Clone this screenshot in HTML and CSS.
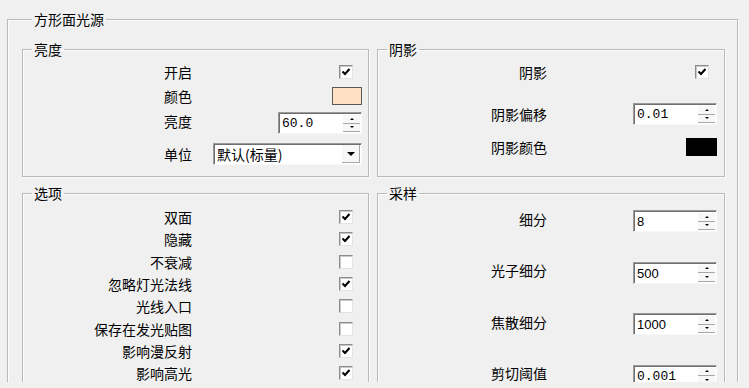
FILE: index.html
```html
<!DOCTYPE html>
<html lang="zh-CN">

<head>
    <meta charset="UTF-8">
    <meta name="viewport" content="width=device-width, initial-scale=1.0">
    <title>方形面光源</title>
    <link rel="stylesheet" href="styles.css">
</head>

<body>

    <div class="screen">
        <fieldset class="group outer">
            <legend>方形面光源</legend>

            <div class="columns">
                <!-- brightness -->
                <fieldset class="group brightness">
                    <legend>亮度</legend>
                    <div class="row">
                        <span class="label">开启</span>
                        <span class="check on"><svg viewBox="0 0 12 12"><path d="M2.5 5.5 L5 8 L9.5 3"/></svg></span>
                    </div>
                    <div class="row">
                        <span class="label">颜色</span>
                        <span class="swatch peach"></span>
                    </div>
                    <div class="row spin-row">
                        <span class="label up">亮度</span>
                        <span class="spin"><span class="value mono">60.0</span><span class="arrows"><i class="up-arrow"></i><i class="down-arrow"></i></span></span>
                    </div>
                    <div class="row select-row">
                        <span class="label">单位</span>
                        <span class="select"><span class="value">默认(标量)</span><span class="drop"><i class="down-arrow big"></i></span></span>
                    </div>
                </fieldset>

                <!-- shadow -->
                <fieldset class="group shadow">
                    <legend>阴影</legend>
                    <div class="row">
                        <span class="label">阴影</span>
                        <span class="check on"><svg viewBox="0 0 12 12"><path d="M2.5 5.5 L5 8 L9.5 3"/></svg></span>
                    </div>
                    <div class="row offset-row">
                        <span class="label">阴影偏移</span>
                        <span class="spin"><span class="value mono">0.01</span><span class="arrows"><i class="up-arrow"></i><i class="down-arrow"></i></span></span>
                    </div>
                    <div class="row">
                        <span class="label">阴影颜色</span>
                        <span class="swatch black"></span>
                    </div>
                </fieldset>

                <!-- options -->
                <fieldset class="group options">
                    <legend>选项</legend>
                    <div class="row"><span class="label">双面</span><span class="check on"><svg viewBox="0 0 12 12"><path d="M2.5 5.5 L5 8 L9.5 3"/></svg></span></div>
                    <div class="row"><span class="label">隐藏</span><span class="check on"><svg viewBox="0 0 12 12"><path d="M2.5 5.5 L5 8 L9.5 3"/></svg></span></div>
                    <div class="row"><span class="label">不衰减</span><span class="check"></span></div>
                    <div class="row"><span class="label">忽略灯光法线</span><span class="check on"><svg viewBox="0 0 12 12"><path d="M2.5 5.5 L5 8 L9.5 3"/></svg></span></div>
                    <div class="row"><span class="label">光线入口</span><span class="check"></span></div>
                    <div class="row"><span class="label">保存在发光贴图</span><span class="check"></span></div>
                    <div class="row"><span class="label">影响漫反射</span><span class="check on"><svg viewBox="0 0 12 12"><path d="M2.5 5.5 L5 8 L9.5 3"/></svg></span></div>
                    <div class="row"><span class="label">影响高光</span><span class="check on"><svg viewBox="0 0 12 12"><path d="M2.5 5.5 L5 8 L9.5 3"/></svg></span></div>
                </fieldset>

                <!-- sampling -->
                <fieldset class="group sampling">
                    <legend>采样</legend>
                    <div class="row">
                        <span class="label up">细分</span>
                        <span class="spin"><span class="value">8</span><span class="arrows"><i class="up-arrow"></i><i class="down-arrow"></i></span></span>
                    </div>
                    <div class="row">
                        <span class="label up">光子细分</span>
                        <span class="spin"><span class="value">500</span><span class="arrows"><i class="up-arrow"></i><i class="down-arrow"></i></span></span>
                    </div>
                    <div class="row">
                        <span class="label up">焦散细分</span>
                        <span class="spin"><span class="value">1000</span><span class="arrows"><i class="up-arrow"></i><i class="down-arrow"></i></span></span>
                    </div>
                    <div class="row">
                        <span class="label up">剪切阈值</span>
                        <span class="spin"><span class="value mono">0.001</span><span class="arrows"><i class="up-arrow"></i><i class="down-arrow"></i></span></span>
                    </div>
                </fieldset>
            </div>
        </fieldset>
    </div>

</body>

</html>
```

FILE: styles.css
```css
body {
    margin: 0;
    background-color: #f0f0f0;
    font-family: "Noto Sans CJK SC", "Liberation Sans", sans-serif;
    font-size: 14px;
    color: #000;
}

.screen {
    height: 382px;
    overflow: hidden;
    padding-top: 11px;
    box-sizing: border-box;
}

/* group boxes */
.group {
    margin: 0;
    min-width: 0;
    border: 1px solid #b9b9b9;
    box-shadow: inset 1px 1px 0 #fcfcfc, 1px 1px 0 #fcfcfc;
}

.group legend {
    line-height: 16px;
    padding: 0 2px;
    margin-left: 9px;
}

.outer {
    width: 731px;
    margin-left: 7px;
    box-sizing: border-box;
    padding: 14px 12px 0 14px;
}

.outer > legend {
    margin-left: 10px;
}

.columns {
    display: grid;
    grid-template-columns: 347px 348px;
    gap: 8px;
}

/* rows */
.row {
    display: grid;
    grid-template-columns: 169px 1fr;
    align-items: center;
}

.label {
    text-align: right;
    line-height: 16px;
    white-space: nowrap;
}

.label.up {
    padding-bottom: 5px;
}

.row > :last-child {
    justify-self: end;
}

.brightness {
    padding: 3px 6px 6px 0;
}

.brightness .row {
    height: 24px;
}

.brightness .spin-row {
    height: 30px;
}

.brightness .select-row {
    height: 32px;
}

.shadow {
    padding: 0 7px 0 0;
}

.shadow .row {
    height: 30px;
}

.shadow .offset-row {
    margin: 12px 0 3px;
}

.options {
    padding: 5px 6px 0 0;
}

.options .row {
    height: 22.3px;
}

.sampling {
    padding: 0 7px 0 0;
    display: flex;
    flex-direction: column;
    gap: 11.5px;
}

.sampling .row {
    height: 40px;
}

/* checkbox */
.check {
    width: 14px;
    height: 14px;
    box-sizing: border-box;
    margin-right: 9px;
    background: #fff;
    border: 1px solid;
    border-color: #8d8d8d #e3e3e3 #e3e3e3 #8d8d8d;
    box-shadow: inset 1px 1px 0 #c9c9c9;
    display: flex;
}

.shadow .check {
    margin-right: 8px;
}

.check svg {
    width: 12px;
    height: 12px;
}

.check path {
    fill: none;
    stroke: #000;
    stroke-width: 2;
}

/* colour swatch */
.swatch {
    width: 30px;
    height: 18px;
    box-sizing: border-box;
    border: 1px solid #5a5a5a;
}

.swatch.peach {
    background: #ffe0c2;
}

.swatch.black {
    width: 31px;
    background: #000;
    border-color: #000;
}

/* spinner */
.spin {
    width: 84px;
    height: 22px;
    box-sizing: border-box;
    display: flex;
    background: #fff;
    border: 1px solid;
    border-color: #9a9a9a #f8f8f8 #f8f8f8 #9a9a9a;
    box-shadow: inset 1px 1px 0 #6f6f6f;
}

.spin .value {
    flex: 1;
    padding: 2px 0 0 3px;
    font-family: "Liberation Sans", sans-serif;
    font-size: 13px;
    line-height: 17px;
}

.value.mono {
    font-family: "Liberation Mono", monospace;
}

.arrows {
    width: 17px;
    display: flex;
    flex-direction: column;
    padding: 2px 1px 1px 0;
}

.arrows i,
.drop i {
    display: flex;
    align-items: center;
    justify-content: center;
}

.arrows i {
    flex: 1;
    background: #f7f7f7;
    border-bottom: 1px solid #a8a8a8;
}

.up-arrow::before,
.down-arrow::before {
    content: "";
    display: block;
    width: 0;
    height: 0;
    border-left: 2px solid transparent;
    border-right: 2px solid transparent;
}

.up-arrow::before {
    border-bottom: 2px solid #000;
}

.down-arrow::before {
    border-top: 2px solid #000;
}

/* dropdown */
.select {
    width: 149px;
    height: 22px;
    box-sizing: border-box;
    display: flex;
    background: #fff;
    border: 1px solid;
    border-color: #9a9a9a #f8f8f8 #f8f8f8 #9a9a9a;
    box-shadow: inset 1px 1px 0 #6f6f6f;
}

.select .value {
    flex: 1;
    padding-left: 3px;
    line-height: 20px;
    white-space: nowrap;
}

.drop {
    width: 17px;
    margin: 1px 1px 1px 0;
    display: flex;
    align-items: center;
    justify-content: center;
    background: #f7f7f7;
    border-bottom: 1px solid #a8a8a8;
    border-right: 1px solid #a8a8a8;
}

.down-arrow.big::before {
    border-left-width: 4px;
    border-right-width: 4px;
    border-top-width: 4px;
}
```
